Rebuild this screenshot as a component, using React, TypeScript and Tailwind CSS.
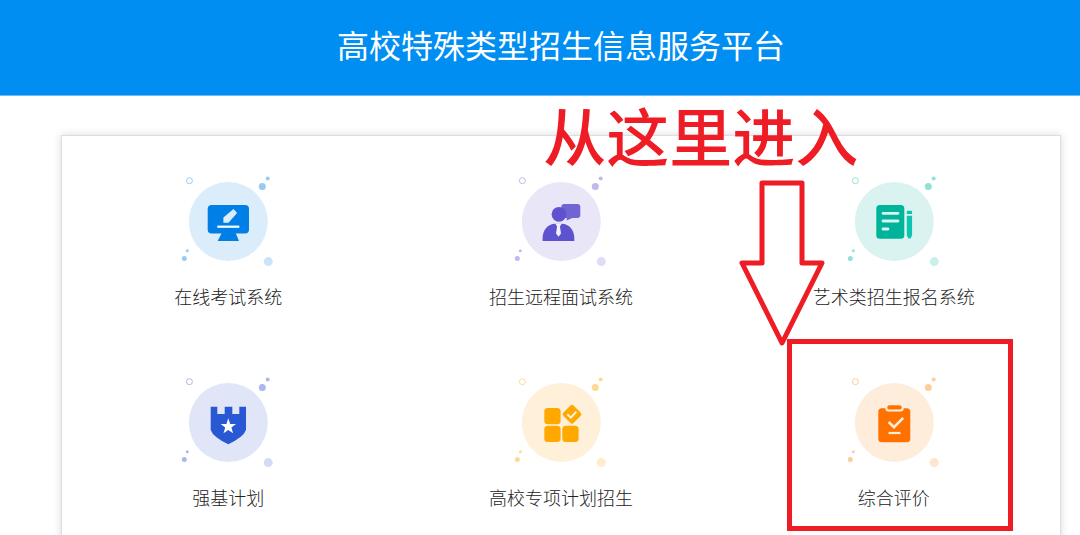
import type { ReactNode } from "react";

interface Tile {
  label: string;
  main: string;
  bg: string;
  dot: string;
  soft: string;
  icon: ReactNode;
  highlight?: boolean;
}

const tiles: Tile[] = [
  {
    label: "在线考试系统",
    main: "#0080e6",
    bg: "#dbecfb",
    dot: "#97cbf5",
    soft: "#cae4fa",
    icon: (
      <>
        <rect x="27.7" y="30" width="41.3" height="28.4" rx="4" />
        <path d="M41.7 58h14l3.3 8H37.7z" />
        <path d="M43.4 42.5 53.5 34l3.6 4-8.6 9.7h-5.1z" fill="#dbecfb" />
        <path d="M37.3 51.7h22" stroke="#fff" strokeWidth="2.2" />
      </>
    ),
  },
  {
    label: "招生远程面试系统",
    main: "#5f52cf",
    bg: "#e8e6f7",
    dot: "#bfb9ec",
    soft: "#dfdcf5",
    icon: (
      <>
        <path
          d="M51.3 29h13a3 3 0 0 1 3 3v8a3 3 0 0 1-3 3h-5l-5.6 2.6V43h-2.4a3 3 0 0 1-3-3v-8a3 3 0 0 1 3-3z"
          opacity=".87"
        />
        <circle cx="46" cy="39.3" r="7.4" />
        <path d="M29.6 66v-3C29.6 55 35 49 42 48.7h7C56 49 61.3 55 61.3 63v3z" />
        <path d="M42.2 48.4h6.6l-1.9 3 1.1 7-2.5 3.4-2.5-3.4 1.1-7z" fill="#f3f1fc" />
      </>
    ),
  },
  {
    label: "艺术类招生报名系统",
    main: "#00b39b",
    bg: "#daf3f0",
    dot: "#93e2d8",
    soft: "#caf0eb",
    icon: (
      <>
        <rect x="30.3" y="30" width="28" height="33.7" rx="3.5" />
        <path
          d="M37 38.3h15M37 46h15M37 54h5"
          stroke="#daf3f0"
          strokeWidth="2.8"
          strokeLinecap="round"
        />
        <path
          d="M61.8 35.7h3.3a1 1 0 0 1 1 1V39h-5.3v-2.3a1 1 0 0 1 1-1zM60.8 40.7h5.3v19.5l-1.6 3.3h-2.1l-1.6-3.3z"
          fill="#0cc5b1"
        />
      </>
    ),
  },
  {
    label: "强基计划",
    main: "#2858d3",
    bg: "#e0e6f8",
    dot: "#a9b9ed",
    soft: "#d3dcf6",
    icon: (
      <>
        <path d="M30.7 30.7h6.6V38h7.4v-7.3h7.6V38h7v-7.3H66V54Q63.5 61 48.3 68.3 33 61 30.7 54z" />
        <path
          d="m48.3 42.3 1.9 5.6h5.8l-4.6 3.6 1.7 5.8-4.8-3.4-4.8 3.4 1.7-5.8-4.6-3.6h5.8z"
          fill="#fff"
        />
      </>
    ),
  },
  {
    label: "高校专项计划招生",
    main: "#ffa800",
    bg: "#fff0da",
    dot: "#ffda96",
    soft: "#ffeccb",
    icon: (
      <>
        <rect x="31.3" y="32" width="16.3" height="16.3" rx="3.5" />
        <rect x="31.3" y="49.7" width="16.3" height="16.3" rx="3.5" />
        <rect x="49.3" y="49.7" width="16.3" height="16.3" rx="3.5" />
        <rect x="51.7" y="31" width="14.6" height="14.6" rx="2.5" transform="rotate(45 59 38.3)" />
        <path d="m54.3 38.3 3.5 3.3 5.5-5.8" fill="none" stroke="#fff0da" strokeWidth="2" />
      </>
    ),
  },
  {
    label: "综合评价",
    main: "#ff7200",
    bg: "#ffeddc",
    dot: "#ffcd99",
    soft: "#ffe5cc",
    highlight: true,
    icon: (
      <>
        <rect x="32.3" y="32.3" width="32" height="34" rx="3.5" />
        <rect x="39.3" y="28" width="18.4" height="7.5" rx="3" fill="#ffeddc" />
        <rect x="41.3" y="29.3" width="14.4" height="4.2" rx="2" />
        <path d="m42.6 46 5.4 5.2 9.2-9.4" fill="none" stroke="#ffeddc" strokeWidth="2.6" />
        <path d="M42.6 57h11.8" stroke="#ffeddc" strokeWidth="2.2" />
      </>
    ),
  },
];

function TileIcon({ tile }: { tile: Tile }) {
  return (
    <svg className="w-24 h-24" viewBox="0 0 96 96" fill={tile.main} aria-hidden="true">
      <circle cx="48.3" cy="46.6" r="39.5" fill={tile.bg} />
      {/* Bubbles around the disc */}
      <circle cx="9.4" cy="5.7" r="3" fill="none" stroke={tile.dot} />
      <g fill={tile.dot}>
        <circle cx="87.7" cy="3.4" r="2" />
        <circle cx="82.3" cy="11.6" r="3.5" />
        <circle cx="7.3" cy="75.7" r="1.5" />
        <circle cx="4.3" cy="83.6" r="2.5" />
      </g>
      <circle cx="88.3" cy="86.6" r="4.5" fill={tile.soft} />
      {tile.icon}
    </svg>
  );
}

function Callout() {
  return (
    <div className="pointer-events-none">
      <p className="absolute -left-46 -top-[274px] whitespace-nowrap text-[63px] leading-16 font-medium text-[#ee1c24]">
        从这里进入
      </p>
      <svg
        className="absolute left-2.5 -top-50 w-22.5 h-43"
        viewBox="0 0 90 172"
        fill="none"
        stroke="#ee1c24"
        strokeWidth="5"
        strokeLinejoin="round"
        aria-hidden="true"
      >
        <path d="M25 7h40v80h20L45 167 5 87h20z" />
      </svg>
      <div className="absolute left-15 -top-[37px] w-[226px] h-48 border-5 border-[#ee1c24]" />
    </div>
  );
}

export default function App() {
  return (
    <div className="min-h-screen max-h-screen overflow-hidden bg-white font-['Noto_Sans_CJK_SC',sans-serif]">
      <header className="flex h-24 items-center justify-center border-b border-[#6cbcf7] bg-[#008ef2] pb-2 pl-[61px] pr-[19px]">
        <h1 className="text-[32px] leading-10 text-white">高校特殊类型招生信息服务平台</h1>
      </header>
      <main className="pl-[61px] pr-[19px] pt-[39px]">
        <div className="grid grid-cols-3 gap-y-[68px] border border-[#dcdee4] bg-white pt-[39px] pb-16 shadow-[0_0_8px_rgba(0,0,0,0.15)]">
          {tiles.map((tile) => (
            <div key={tile.label} className="relative flex justify-center">
              <a href="#" className="flex flex-col items-center gap-[13px]">
                <TileIcon tile={tile} />
                <span className="text-lg leading-6 font-light text-[#222]">{tile.label}</span>
              </a>
              {tile.highlight && <Callout />}
            </div>
          ))}
        </div>
      </main>
    </div>
  );
}
